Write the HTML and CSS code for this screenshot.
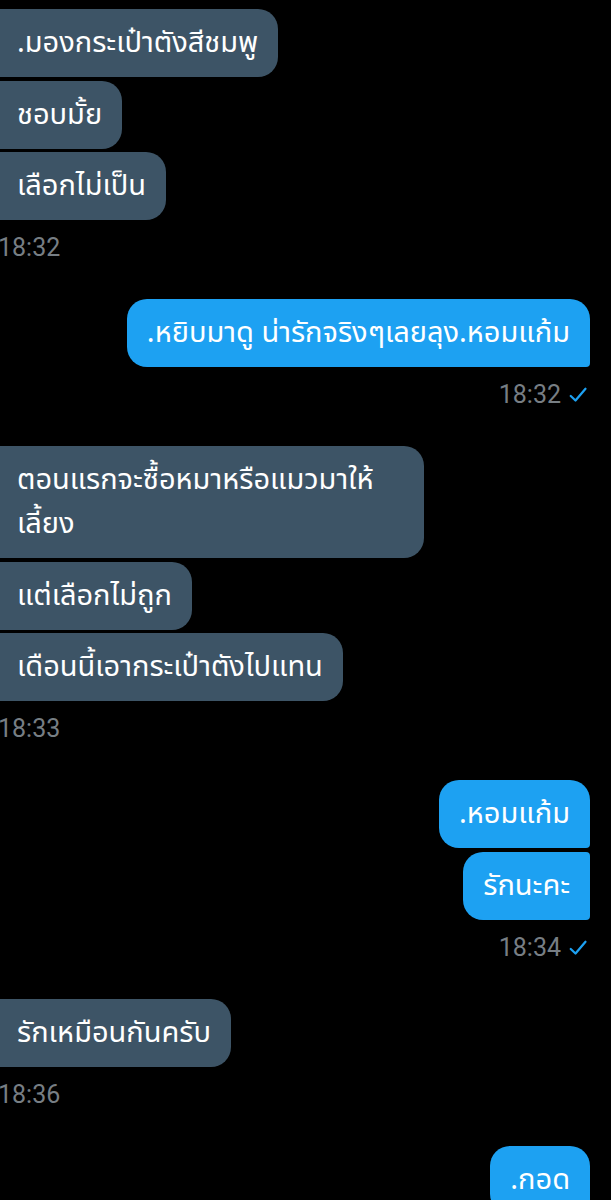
FILE: index.html
```html
<!DOCTYPE html>
<html lang="th">
<head>
<meta charset="utf-8">
<link rel="stylesheet" href="styles.css">
</head>
<body>
<main class="chat">
  <section class="group in">
    <div class="bubble">.มองกระเป๋าตังสีชมพู</div>
    <div class="bubble">ชอบมั้ย</div>
    <div class="bubble">เลือกไม่เป็น</div>
    <div class="time">18:32</div>
  </section>
  <section class="group out">
    <div class="bubble">.หยิบมาดู น่ารักจริงๆเลยลุง.หอมแก้ม</div>
    <div class="time">18:32 <svg class="check" viewBox="0 0 16 16"><path d="M2.2 8.8 L6 12.4 L14 3"/></svg></div>
  </section>
  <section class="group in">
    <div class="bubble">ตอนแรกจะซื้อหมาหรือแมวมาให้เลี้ยง</div>
    <div class="bubble">แต่เลือกไม่ถูก</div>
    <div class="bubble">เดือนนี้เอากระเป๋าตังไปแทน</div>
    <div class="time">18:33</div>
  </section>
  <section class="group out">
    <div class="bubble">.หอมแก้ม</div>
    <div class="bubble">รักนะคะ</div>
    <div class="time">18:34 <svg class="check" viewBox="0 0 16 16"><path d="M2.2 8.8 L6 12.4 L14 3"/></svg></div>
  </section>
  <section class="group in">
    <div class="bubble">รักเหมือนกันครับ</div>
    <div class="time">18:36</div>
  </section>
  <section class="group out">
    <div class="bubble">.กอด</div>
  </section>
</main>
</body>
</html>
```
FILE: styles.css
```css
html, body {
  margin: 0;
  padding: 0;
  background: #000;
}
body {
  font-family: "Noto Sans Thai", "Noto Sans", Roboto, sans-serif;
  color: #fff;
  overflow: hidden;
}
.chat {
  display: flex;
  flex-direction: column;
  gap: 36px;
  padding-top: 9px;
}
.group {
  display: flex;
  flex-direction: column;
  gap: 3.5px;
}
.group.in {
  align-items: flex-start;
}
.group.out {
  align-items: flex-end;
  padding-right: 21px;
}
.bubble {
  box-sizing: border-box;
  font-size: 29px;
  line-height: 44px;
  padding: 12px 20px;
  border-radius: 20px;
}
.in .bubble {
  background: #3d5466;
  margin-left: -20px;
  padding-left: 37px;
  padding-right: 20px;
  max-width: 444px;
}
.out .bubble {
  background: #1da1f2;
  border-top-right-radius: 4px;
  border-bottom-right-radius: 4px;
}
.out .bubble:first-child {
  border-top-right-radius: 20px;
}
.time {
  margin-top: 9.5px;
  font-family: Roboto, "Noto Sans", sans-serif;
  font-size: 25px;
  line-height: 30px;
  color: #777e84;
  display: flex;
  align-items: center;
  gap: 7px;
}
.in .time {
  margin-left: -2px;
}
.out .time {
  margin-right: 2px;
}
.check {
  width: 20px;
  height: 20px;
  fill: none;
  stroke: #1da1f2;
  stroke-width: 1.8;
  stroke-linecap: round;
  stroke-linejoin: round;
}
```
